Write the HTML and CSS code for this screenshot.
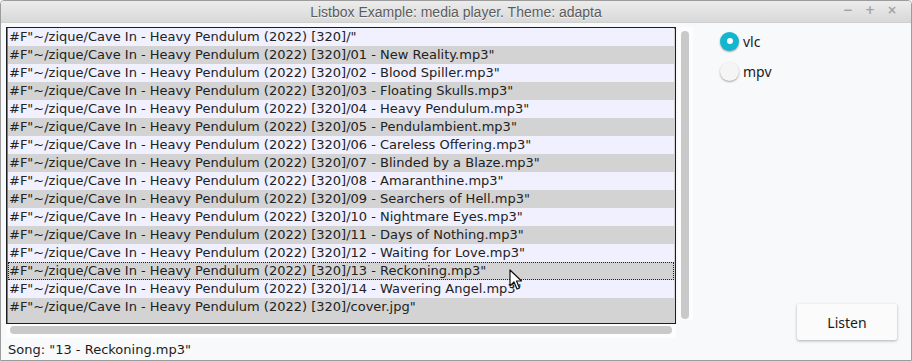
FILE: index.html
```html
<!DOCTYPE html>
<html lang="en">
<head>
  <meta charset="UTF-8" />
  <title>Listbox Example</title>
  <link rel="stylesheet" href="styles.css">
</head>
<body>

<div id="window">
  <div id="titlebar">
    <span class="title">Listbox Example: media player. Theme: adapta</span>
    <div class="controls">
      <span>&minus;</span>
      <span>+</span>
      <span>&times;</span>
    </div>
  </div>

  <div id="content">
    <div id="leftPane">
      <div class="list-area">
        <div id="listbox">
          <div class="row">#F"~/zique/Cave In - Heavy Pendulum (2022) [320]/"</div>
          <div class="row">#F"~/zique/Cave In - Heavy Pendulum (2022) [320]/01 - New Reality.mp3"</div>
          <div class="row">#F"~/zique/Cave In - Heavy Pendulum (2022) [320]/02 - Blood Spiller.mp3"</div>
          <div class="row">#F"~/zique/Cave In - Heavy Pendulum (2022) [320]/03 - Floating Skulls.mp3"</div>
          <div class="row">#F"~/zique/Cave In - Heavy Pendulum (2022) [320]/04 - Heavy Pendulum.mp3"</div>
          <div class="row">#F"~/zique/Cave In - Heavy Pendulum (2022) [320]/05 - Pendulambient.mp3"</div>
          <div class="row">#F"~/zique/Cave In - Heavy Pendulum (2022) [320]/06 - Careless Offering.mp3"</div>
          <div class="row">#F"~/zique/Cave In - Heavy Pendulum (2022) [320]/07 - Blinded by a Blaze.mp3"</div>
          <div class="row">#F"~/zique/Cave In - Heavy Pendulum (2022) [320]/08 - Amaranthine.mp3"</div>
          <div class="row">#F"~/zique/Cave In - Heavy Pendulum (2022) [320]/09 - Searchers of Hell.mp3"</div>
          <div class="row">#F"~/zique/Cave In - Heavy Pendulum (2022) [320]/10 - Nightmare Eyes.mp3"</div>
          <div class="row">#F"~/zique/Cave In - Heavy Pendulum (2022) [320]/11 - Days of Nothing.mp3"</div>
          <div class="row">#F"~/zique/Cave In - Heavy Pendulum (2022) [320]/12 - Waiting for Love.mp3"</div>
          <div class="row active">#F"~/zique/Cave In - Heavy Pendulum (2022) [320]/13 - Reckoning.mp3"</div>
          <div class="row">#F"~/zique/Cave In - Heavy Pendulum (2022) [320]/14 - Wavering Angel.mp3"</div>
          <div class="row">#F"~/zique/Cave In - Heavy Pendulum (2022) [320]/cover.jpg"</div>
        </div>
        <div class="vscroll"><div class="thumb"></div></div>
      </div>
      <div class="hscroll"><div class="thumb"></div></div>
      <div id="status">Song: "13 - Reckoning.mp3"</div>
    </div>

    <div id="rightPane">
      <label class="radio checked"><span class="dot"></span>vlc</label>
      <label class="radio"><span class="dot"></span>mpv</label>
      <div class="spacer"></div>
      <button id="listenBtn">Listen</button>
    </div>
  </div>

  <svg class="cursor" width="14" height="22" viewBox="0 0 14 22">
    <path d="M1 1 L1 17 L5 13 L8 20 L10.5 19 L7.5 12 L12.5 12 Z" fill="#fff" stroke="#111" stroke-width="1.2" stroke-linejoin="round"/>
  </svg>
</div>

</body>
</html>
```

FILE: styles.css
```css
html, body {
  margin: 0;
  height: 100%;
  overflow: hidden;
  background: #ffffff;
}

#window {
  position: relative;
  width: 912px;
  height: 361px;
  box-sizing: border-box;
  border: 1px solid #9c9c9c;
  border-radius: 4px 4px 0 0;
  background: #f8f9fb;
  display: flex;
  flex-direction: column;
  font-family: "DejaVu Sans", sans-serif;
}

#titlebar {
  height: 21px;
  flex: none;
  display: flex;
  align-items: center;
  justify-content: center;
  position: relative;
  background: linear-gradient(#ececec, #d8d8d8);
  border-bottom: 1px solid #cfcfcf;
  border-radius: 3px 3px 0 0;
}

.title {
  font-family: "Liberation Sans", sans-serif;
  font-size: 14px;
  color: #5c5c5c;
  text-shadow: 0 1px 0 #f6f6f6;
}

.controls {
  position: absolute;
  right: 14px;
  top: 2px;
  display: flex;
  gap: 12px;
  font-family: "DejaVu Sans", sans-serif;
  font-size: 12px;
  font-weight: bold;
  color: #a3a3a3;
}

#content {
  flex: 1;
  display: flex;
}

#leftPane {
  width: 692px;
  padding: 4px 0 0 5px;
  display: flex;
  flex-direction: column;
}

.list-area {
  display: flex;
  gap: 2px;
}

#listbox {
  width: 670px;
  height: 297px;
  box-sizing: border-box;
  border: 1px solid #1e1e1e;
  box-shadow: inset 1px 1px 0 #7d7d7d;
  background: #d3d3d3;
  padding: 0 1px;
  font-size: 13px;
  color: #222;
  overflow: hidden;
}

.row {
  height: 18px;
  line-height: 18px;
  padding-left: 1px;
  white-space: nowrap;
  box-sizing: border-box;
}

.row:nth-child(odd) {
  background: #f0f0ff;
}

.row:nth-child(even) {
  background: #d3d3d3;
}

.row.active {
  outline: 1px dotted #222;
  outline-offset: -1px;
}

.vscroll {
  width: 15px;
  height: 293px;
  background: #fdfdfd;
  padding: 4px 0 0 3px;
  box-sizing: border-box;
}

.vscroll .thumb {
  width: 8px;
  height: 288px;
  border-radius: 4px;
  background: #c9c9c9;
}

.hscroll {
  width: 670px;
  height: 14px;
  box-sizing: border-box;
  padding: 2px 0 0 4px;
  background: #fdfdfd;
}

.hscroll .thumb {
  width: 662px;
  height: 8px;
  border-radius: 4px;
  background: #c9c9c9;
}

#status {
  padding: 4px 0 0 2px;
  font-size: 13px;
  color: #1c1c1c;
}

#rightPane {
  flex: 1;
  display: flex;
  flex-direction: column;
  align-items: flex-start;
  padding: 3px 14px 19px 22px;
}

.radio {
  display: flex;
  align-items: center;
  gap: 4px;
  height: 30px;
  font-family: "Noto Sans", sans-serif;
  font-size: 14px;
  color: #1a1a1a;
}

.radio .dot {
  width: 19px;
  height: 19px;
  border-radius: 50%;
  background: #f5f5f5;
  box-shadow: 0 1px 2px rgb(0 0 0 / 0.35);
  position: relative;
}

.radio.checked .dot {
  background: #12b7cf;
}

.radio.checked .dot::after {
  content: "";
  position: absolute;
  left: 6.5px;
  top: 6.5px;
  width: 6px;
  height: 6px;
  border-radius: 50%;
  background: #ffffff;
}

.spacer {
  flex: 1;
}

#listenBtn {
  align-self: flex-end;
  width: 100px;
  height: 36px;
  margin-bottom: 1px;
  border: none;
  border-radius: 2px;
  background: #fbfbfb;
  box-shadow: 0 1px 3px rgb(0 0 0 / 0.3);
  font-family: "Noto Sans", sans-serif;
  font-size: 14px;
  color: #1a1a1a;
}

.cursor {
  position: absolute;
  left: 508px;
  top: 268px;
}
```
